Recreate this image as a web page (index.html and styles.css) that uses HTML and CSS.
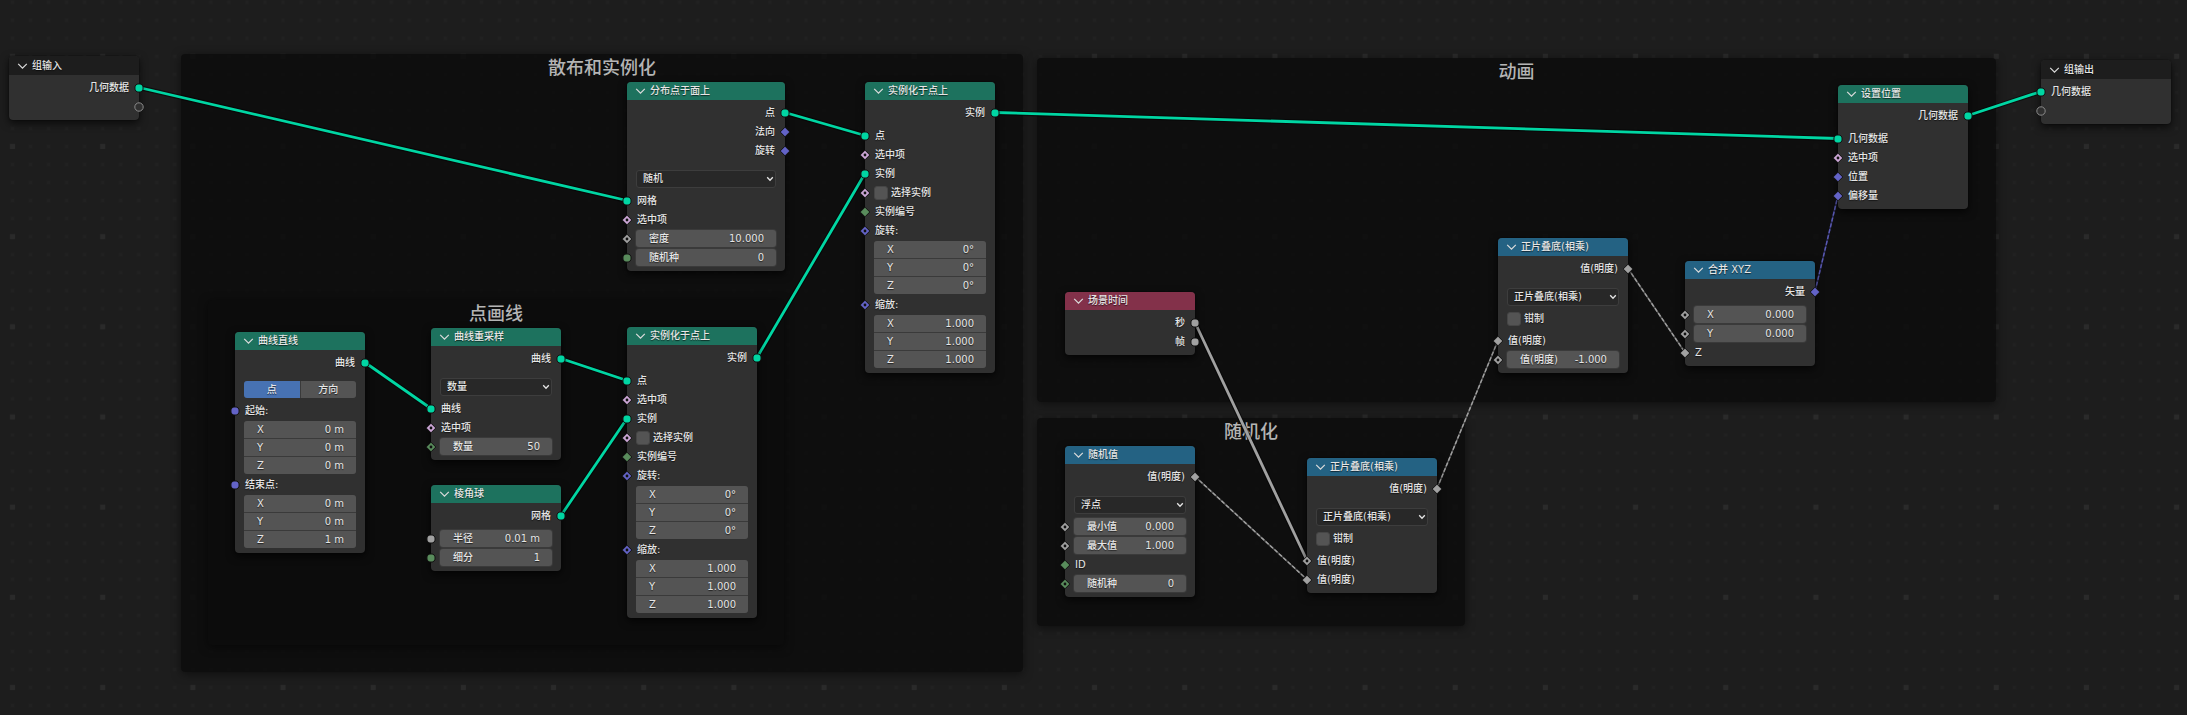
FILE: index.html
```html
<!DOCTYPE html>
<html lang="zh-CN">
<head>
<meta charset="utf-8">
<title>几何节点编辑器</title>
<link rel="stylesheet" href="styles.css">
</head>
<body>
<svg class="defs" aria-hidden="true">
  <symbol id="s-dot" viewBox="0 0 12 12"><circle cx="6" cy="6" r="4.1" fill="currentColor" stroke="#111" stroke-width="1"/></symbol>
  <symbol id="s-dia" viewBox="0 0 12 12"><path d="M6 1.2 10.8 6 6 10.8 1.2 6Z" fill="currentColor" stroke="#111" stroke-width="1"/></symbol>
  <symbol id="s-diadot" viewBox="0 0 12 12"><path d="M6 1.2 10.8 6 6 10.8 1.2 6Z" fill="currentColor" stroke="#111" stroke-width="1"/><circle cx="6" cy="6" r="1.4" fill="#111"/></symbol>
  <symbol id="s-ring" viewBox="0 0 12 12"><circle cx="6" cy="6" r="4.2" fill="#303030" stroke="#8a8a8a" stroke-width="1"/></symbol>
  <symbol id="chev" viewBox="0 0 11 6"><path d="M1.2.8 5.5 5.1 9.8.8" fill="none" stroke="currentColor" stroke-width="1.2"/></symbol>
  <symbol id="arrow" viewBox="0 0 8 6"><path d="M1.2 1.3 4 4.2 6.8 1.3" fill="none" stroke="currentColor" stroke-width="1.3"/></symbol>
</svg>
<main class="canvas">
  <svg class="grid" aria-hidden="true">
    <defs>
      <pattern id="minor" x="3.5" y="11.2" width="18.034" height="18.034" patternUnits="userSpaceOnUse"><rect x="7.5" y="7.5" width="3" height="3" fill="#212121"/></pattern>
      <pattern id="major" x="-32.5" y="11.3" width="90.17" height="90.17" patternUnits="userSpaceOnUse"><rect x="42.5" y="42.5" width="5" height="5" fill="#2a2a2a"/></pattern>
    </defs>
    <rect width="100%" height="100%" fill="url(#minor)"/>
    <rect width="100%" height="100%" fill="url(#major)"/>
  </svg>

  <section class="frame frame-scatter"><h2>散布和实例化</h2></section>
  <section class="frame frame-stroke"><h2>点画线</h2></section>
  <section class="frame frame-anim"><h2>动画</h2></section>
  <section class="frame frame-random"><h2>随机化</h2></section>

  <svg class="links" aria-hidden="true">
    <g class="halo">
      <path d="M139 87.5 627 200.5M785 112.5 865 135.5M757 357.5 865 173.5M365 362.5 431 408.5M561 358.5 627 380.5M561 515.5 627 418.5M995 112.5 1838 138.5M1968 115.5 2041 91.5M1195 322.5 1307 560.5"/>
    </g>
    <g class="geo">
      <path d="M139 87.5 627 200.5M785 112.5 865 135.5M757 357.5 865 173.5M365 362.5 431 408.5M561 358.5 627 380.5M561 515.5 627 418.5M995 112.5 1838 138.5M1968 115.5 2041 91.5"/>
    </g>
    <path class="val" d="M1195 322.5 1307 560.5"/>
    <g class="field-under"><path d="M1195 476.5 1307 579.5M1437 488.5 1498 340.5M1628 268.5 1685 352.5"/><path class="vec" d="M1815 291.5 1838 195.5"/></g>
    <g class="field-over"><path d="M1195 476.5 1307 579.5M1437 488.5 1498 340.5M1628 268.5 1685 352.5"/><path class="vec" d="M1815 291.5 1838 195.5"/></g>
  </svg>

  <article class="node io n-input">
    <header><button aria-label="折叠"><svg><use href="#chev"/></svg></button><h3>组输入</h3></header>
    <div class="row out"><span>几何数据</span><svg class="sk geometry"><use href="#s-dot"/></svg></div>
    <div class="row out"><svg class="sk"><use href="#s-ring"/></svg></div>
  </article>

  <article class="node geom n-distribute">
    <header><button aria-label="折叠"><svg><use href="#chev"/></svg></button><h3>分布点于面上</h3></header>
    <div class="row out"><span>点</span><svg class="sk geometry"><use href="#s-dot"/></svg></div>
    <div class="row out"><span>法向</span><svg class="sk vector"><use href="#s-dia"/></svg></div>
    <div class="row out"><span>旋转</span><svg class="sk vector"><use href="#s-dia"/></svg></div>
    <div class="pick"><select aria-label="分布方法"><option>随机</option></select><svg><use href="#arrow"/></svg></div>
    <div class="row"><svg class="sk geometry"><use href="#s-dot"/></svg><span>网格</span></div>
    <div class="row"><svg class="sk bool"><use href="#s-diadot"/></svg><span>选中项</span></div>
    <div class="row"><svg class="sk float"><use href="#s-diadot"/></svg><label class="num"><span>密度</span><input value="10.000"></label></div>
    <div class="row"><svg class="sk int"><use href="#s-dot"/></svg><label class="num"><span>随机种</span><input value="0"></label></div>
  </article>

  <article class="node geom n-instance">
    <header><button aria-label="折叠"><svg><use href="#chev"/></svg></button><h3>实例化于点上</h3></header>
    <div class="row out"><span>实例</span><svg class="sk geometry"><use href="#s-dot"/></svg></div>
    <div class="row first"><svg class="sk geometry"><use href="#s-dot"/></svg><span>点</span></div>
    <div class="row"><svg class="sk bool"><use href="#s-diadot"/></svg><span>选中项</span></div>
    <div class="row"><svg class="sk geometry"><use href="#s-dot"/></svg><span>实例</span></div>
    <div class="row"><svg class="sk bool"><use href="#s-diadot"/></svg><label class="check"><input type="checkbox">选择实例</label></div>
    <div class="row"><svg class="sk int"><use href="#s-dia"/></svg><span>实例编号</span></div>
    <div class="row"><svg class="sk vector"><use href="#s-diadot"/></svg><span>旋转:</span></div>
    <div class="triple"><label class="num"><span>X</span><input value="0°"></label><label class="num"><span>Y</span><input value="0°"></label><label class="num"><span>Z</span><input value="0°"></label></div>
    <div class="row"><svg class="sk vector"><use href="#s-diadot"/></svg><span>缩放:</span></div>
    <div class="triple"><label class="num"><span>X</span><input value="1.000"></label><label class="num"><span>Y</span><input value="1.000"></label><label class="num"><span>Z</span><input value="1.000"></label></div>
  </article>

  <article class="node geom n-line">
    <header><button aria-label="折叠"><svg><use href="#chev"/></svg></button><h3>曲线直线</h3></header>
    <div class="row out"><span>曲线</span><svg class="sk geometry"><use href="#s-dot"/></svg></div>
    <div class="toggle"><button class="on" aria-pressed="true">点</button><button aria-pressed="false">方向</button></div>
    <div class="row"><svg class="sk vector"><use href="#s-dot"/></svg><span>起始:</span></div>
    <div class="triple"><label class="num"><span>X</span><input value="0 m"></label><label class="num"><span>Y</span><input value="0 m"></label><label class="num"><span>Z</span><input value="0 m"></label></div>
    <div class="row"><svg class="sk vector"><use href="#s-dot"/></svg><span>结束点:</span></div>
    <div class="triple"><label class="num"><span>X</span><input value="0 m"></label><label class="num"><span>Y</span><input value="0 m"></label><label class="num"><span>Z</span><input value="1 m"></label></div>
  </article>

  <article class="node geom n-resample">
    <header><button aria-label="折叠"><svg><use href="#chev"/></svg></button><h3>曲线重采样</h3></header>
    <div class="row out"><span>曲线</span><svg class="sk geometry"><use href="#s-dot"/></svg></div>
    <div class="pick"><select aria-label="模式"><option>数量</option></select><svg><use href="#arrow"/></svg></div>
    <div class="row"><svg class="sk geometry"><use href="#s-dot"/></svg><span>曲线</span></div>
    <div class="row"><svg class="sk bool"><use href="#s-diadot"/></svg><span>选中项</span></div>
    <div class="row"><svg class="sk int"><use href="#s-diadot"/></svg><label class="num"><span>数量</span><input value="50"></label></div>
  </article>

  <article class="node geom n-ico">
    <header><button aria-label="折叠"><svg><use href="#chev"/></svg></button><h3>棱角球</h3></header>
    <div class="row out"><span>网格</span><svg class="sk geometry"><use href="#s-dot"/></svg></div>
    <div class="row first"><svg class="sk float"><use href="#s-dot"/></svg><label class="num"><span>半径</span><input value="0.01 m"></label></div>
    <div class="row"><svg class="sk int"><use href="#s-dot"/></svg><label class="num"><span>细分</span><input value="1"></label></div>
  </article>

  <article class="node geom n-instance-stroke">
    <header><button aria-label="折叠"><svg><use href="#chev"/></svg></button><h3>实例化于点上</h3></header>
    <div class="row out"><span>实例</span><svg class="sk geometry"><use href="#s-dot"/></svg></div>
    <div class="row first"><svg class="sk geometry"><use href="#s-dot"/></svg><span>点</span></div>
    <div class="row"><svg class="sk bool"><use href="#s-diadot"/></svg><span>选中项</span></div>
    <div class="row"><svg class="sk geometry"><use href="#s-dot"/></svg><span>实例</span></div>
    <div class="row"><svg class="sk bool"><use href="#s-diadot"/></svg><label class="check"><input type="checkbox">选择实例</label></div>
    <div class="row"><svg class="sk int"><use href="#s-dia"/></svg><span>实例编号</span></div>
    <div class="row"><svg class="sk vector"><use href="#s-diadot"/></svg><span>旋转:</span></div>
    <div class="triple"><label class="num"><span>X</span><input value="0°"></label><label class="num"><span>Y</span><input value="0°"></label><label class="num"><span>Z</span><input value="0°"></label></div>
    <div class="row"><svg class="sk vector"><use href="#s-diadot"/></svg><span>缩放:</span></div>
    <div class="triple"><label class="num"><span>X</span><input value="1.000"></label><label class="num"><span>Y</span><input value="1.000"></label><label class="num"><span>Z</span><input value="1.000"></label></div>
  </article>

  <article class="node scene n-time">
    <header><button aria-label="折叠"><svg><use href="#chev"/></svg></button><h3>场景时间</h3></header>
    <div class="row out"><span>秒</span><svg class="sk float"><use href="#s-dot"/></svg></div>
    <div class="row out"><span>帧</span><svg class="sk float"><use href="#s-dot"/></svg></div>
  </article>

  <article class="node conv n-random">
    <header><button aria-label="折叠"><svg><use href="#chev"/></svg></button><h3>随机值</h3></header>
    <div class="row out"><span>值(明度)</span><svg class="sk float"><use href="#s-dia"/></svg></div>
    <div class="pick"><select aria-label="数据类型"><option>浮点</option></select><svg><use href="#arrow"/></svg></div>
    <div class="row"><svg class="sk float"><use href="#s-diadot"/></svg><label class="num"><span>最小值</span><input value="0.000"></label></div>
    <div class="row"><svg class="sk float"><use href="#s-diadot"/></svg><label class="num"><span>最大值</span><input value="1.000"></label></div>
    <div class="row"><svg class="sk int"><use href="#s-dia"/></svg><span>ID</span></div>
    <div class="row"><svg class="sk int"><use href="#s-diadot"/></svg><label class="num"><span>随机种</span><input value="0"></label></div>
  </article>

  <article class="node conv n-mul-random">
    <header><button aria-label="折叠"><svg><use href="#chev"/></svg></button><h3>正片叠底(相乘)</h3></header>
    <div class="row out"><span>值(明度)</span><svg class="sk float"><use href="#s-dia"/></svg></div>
    <div class="pick"><select aria-label="运算"><option>正片叠底(相乘)</option></select><svg><use href="#arrow"/></svg></div>
    <div class="row clamp"><label class="check"><input type="checkbox">钳制</label></div>
    <div class="row"><svg class="sk float"><use href="#s-diadot"/></svg><span>值(明度)</span></div>
    <div class="row"><svg class="sk float"><use href="#s-dia"/></svg><span>值(明度)</span></div>
  </article>

  <article class="node conv n-mul-anim">
    <header><button aria-label="折叠"><svg><use href="#chev"/></svg></button><h3>正片叠底(相乘)</h3></header>
    <div class="row out"><span>值(明度)</span><svg class="sk float"><use href="#s-dia"/></svg></div>
    <div class="pick"><select aria-label="运算"><option>正片叠底(相乘)</option></select><svg><use href="#arrow"/></svg></div>
    <div class="row clamp"><label class="check"><input type="checkbox">钳制</label></div>
    <div class="row"><svg class="sk float"><use href="#s-dia"/></svg><span>值(明度)</span></div>
    <div class="row"><svg class="sk float"><use href="#s-diadot"/></svg><label class="num"><span>值(明度)</span><input value="-1.000"></label></div>
  </article>

  <article class="node conv n-combine">
    <header><button aria-label="折叠"><svg><use href="#chev"/></svg></button><h3>合并 XYZ</h3></header>
    <div class="row out"><span>矢量</span><svg class="sk vector"><use href="#s-dia"/></svg></div>
    <div class="row first"><svg class="sk float"><use href="#s-diadot"/></svg><label class="num"><span>X</span><input value="0.000"></label></div>
    <div class="row"><svg class="sk float"><use href="#s-diadot"/></svg><label class="num"><span>Y</span><input value="0.000"></label></div>
    <div class="row"><svg class="sk float"><use href="#s-dia"/></svg><span>Z</span></div>
  </article>

  <article class="node geom n-setpos">
    <header><button aria-label="折叠"><svg><use href="#chev"/></svg></button><h3>设置位置</h3></header>
    <div class="row out"><span>几何数据</span><svg class="sk geometry"><use href="#s-dot"/></svg></div>
    <div class="row first"><svg class="sk geometry"><use href="#s-dot"/></svg><span>几何数据</span></div>
    <div class="row"><svg class="sk bool"><use href="#s-diadot"/></svg><span>选中项</span></div>
    <div class="row"><svg class="sk vector"><use href="#s-dia"/></svg><span>位置</span></div>
    <div class="row"><svg class="sk vector"><use href="#s-dia"/></svg><span>偏移量</span></div>
  </article>

  <article class="node io n-output">
    <header><button aria-label="折叠"><svg><use href="#chev"/></svg></button><h3>组输出</h3></header>
    <div class="row"><svg class="sk geometry"><use href="#s-dot"/></svg><span>几何数据</span></div>
    <div class="row"><svg class="sk"><use href="#s-ring"/></svg></div>
  </article>
</main>
</body>
</html>
```
FILE: styles.css
```css
* { box-sizing: border-box; }

body {
  margin: 0;
  background: #1d1d1d;
  color: #e6e6e6;
  font: 500 10px/16px "DejaVu Sans", "Noto Sans CJK SC", sans-serif;
}

button, input, select {
  margin: 0;
  padding: 0;
  border: 0;
  background: none;
  color: inherit;
  font: inherit;
  text-shadow: inherit;
}

.defs { position: absolute; width: 0; height: 0; }

.canvas {
  position: relative;
  min-height: 100vh;
  overflow: hidden;
}

.grid, .links {
  position: absolute;
  inset: 0;
  width: 100%;
  height: 100%;
}

/* Frames */
.frame {
  position: absolute;
  border-radius: 4px;
  background: rgba(12, 12, 12, .84);
  box-shadow: 0 2px 10px rgba(0, 0, 0, .5);
}
.frame h2 {
  margin: 0;
  color: #b4b4b4;
  font-size: 18px;
  font-weight: 500;
  line-height: 28px;
  text-align: center;
}
.frame-scatter { left: 181px; top: 54px; width: 842px; height: 618px; }
.frame-stroke { left: 208px; top: 300px; width: 576px; height: 345px; }
.frame-anim { left: 1037px; top: 58px; width: 959px; height: 344px; }
.frame-random { left: 1037px; top: 418px; width: 428px; height: 208px; }

/* Links */
.links path { fill: none; }
.halo { stroke: rgba(0, 0, 0, .5); stroke-width: 5; }
.geo { stroke: #00d6a3; stroke-width: 2.8; }
.links .val { stroke: #a1a1a1; stroke-width: 2.8; }
.field-under { stroke: #555; stroke-width: 1.6; }
.field-over { stroke: #a1a1a1; stroke-width: 1.4; stroke-dasharray: 4 2; }
.field-under .vec { stroke: #2c2c58; }
.field-over .vec { stroke: #5a5ab4; }

/* Nodes */
.node {
  position: absolute;
  width: 130px;
  padding-bottom: 4px;
  border-radius: 4px;
  background: #303030;
  box-shadow: 0 0 1px #000, 0 3px 8px rgba(0, 0, 0, .7);
  text-shadow: 0 1px 1px rgba(0, 0, 0, .6);
}
.node header {
  display: flex;
  align-items: center;
  gap: 4px;
  height: 18px;
  margin-bottom: 3px;
  padding: 0 8px;
  border-radius: 4px 4px 0 0;
}
.node header button { width: 11px; height: 16px; color: #dcdcdc; }
.node header svg { display: block; width: 11px; height: 16px; }
.node h3 { margin: 0; font-size: 10px; font-weight: 500; line-height: 16px; }
.node.io header { height: 19px; background: #1d1d1d; }
.geom header { background: #1d725e; }
.conv header { background: #246283; }
.scene header { background: #83314a; }

.n-input { left: 9px; top: 56px; }
.n-distribute { left: 627px; top: 82px; width: 158px; }
.n-instance { left: 865px; top: 82px; }
.n-line { left: 235px; top: 332px; }
.n-resample { left: 431px; top: 328px; }
.n-ico { left: 431px; top: 485px; }
.n-instance-stroke { left: 627px; top: 327px; }
.n-time { left: 1065px; top: 292px; }
.n-random { left: 1065px; top: 446px; }
.n-mul-random { left: 1307px; top: 458px; }
.n-mul-anim { left: 1498px; top: 238px; }
.n-combine { left: 1685px; top: 261px; }
.n-setpos { left: 1838px; top: 85px; }
.n-output { left: 2041px; top: 60px; }

.row {
  position: relative;
  display: flex;
  align-items: center;
  height: 19px;
  padding: 0 9px;
}
.row > span { padding: 0 1px; }
.row.out { justify-content: flex-end; }
.row.first { margin-top: 4px; }
.row.clamp { margin-bottom: 3px; }

/* Sockets straddle the node's edge */
.sk { position: absolute; left: -6px; width: 12px; height: 12px; }
.out .sk { left: auto; right: -6px; }
.geometry { color: #00d6a3; }
.vector { color: #6363c7; }
.float { color: #a1a1a1; }
.int { color: #598c5c; }
.bool { color: #cca6d6; }

.num {
  display: flex;
  flex: 1;
  align-items: center;
  min-width: 0;
  height: 17px;
  padding: 0 12px 0 13px;
  border-radius: 3px;
  background: #545454;
  box-shadow: 0 0 0 1px #3a3a3a;
}
.num span { flex: none; }
.num input { flex: 1; width: 0; min-width: 0; height: 16px; text-align: right; }

.triple {
  display: grid;
  grid-template-rows: repeat(3, 17px);
  gap: 1px;
  margin: 1px 9px 1px;
  overflow: hidden;
  border-radius: 3px;
  background: #3a3a3a;
}
.triple .num { border-radius: 0; box-shadow: none; }

.pick { position: relative; margin: 10px 9px 3px; }
.pick select {
  display: block;
  width: 100%;
  height: 18px;
  padding: 0 6px;
  border: 1px solid #3d3d3d;
  border-radius: 3px;
  background: #282828;
  appearance: none;
}
.pick svg {
  position: absolute;
  right: 2px;
  top: 6px;
  width: 8px;
  height: 6px;
  pointer-events: none;
}

.toggle {
  display: grid;
  grid-template-columns: 1fr 1fr;
  gap: 1px;
  height: 17px;
  margin: 9px 9px 3px;
  overflow: hidden;
  border-radius: 3px;
  background: #3a3a3a;
}
.toggle button { background: #545454; line-height: 16px; }
.toggle .on { background: #4772b3; }

.check { display: flex; align-items: center; gap: 3px; }
.check input {
  width: 14px;
  height: 14px;
  border: 1px solid #464646;
  border-radius: 3px;
  background: #545454;
  appearance: none;
}
```
